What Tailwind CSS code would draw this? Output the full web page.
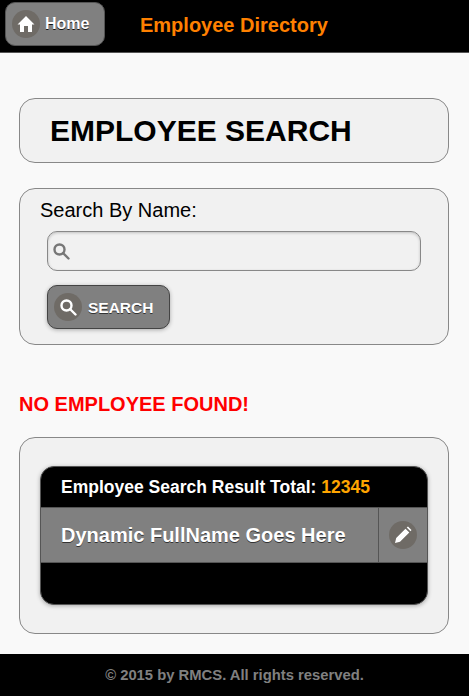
<!DOCTYPE html>
<html lang="en">
<head>
  <meta charset="UTF-8" />
  <meta name="viewport" content="width=device-width, initial-scale=1.0"/>
  <title>Employee Directory</title>
  <script src="https://cdn.jsdelivr.net/npm/@tailwindcss/browser@4"></script>
</head>
<body class="bg-[#f9f9f9] text-black font-['Liberation_Sans',Arial,sans-serif] w-[469px] h-[696px] overflow-hidden flex flex-col">

  <header class="h-[53px] shrink-0 bg-black border-b border-[#555] flex items-start">
    <a class="mt-[2px] ml-[5px] w-[100px] h-[44px] rounded-[10px] bg-[#808080] border border-[#555] flex items-start pl-[6px] pt-[7px]">
      <span class="w-[28px] h-[28px] rounded-full bg-[#6f6b66] flex items-center justify-center">
        <svg width="18" height="18" viewBox="0 0 18 18"><path d="M9 1 L17.5 9.5 L15 9.5 L15 17 L11 17 L11 11 L7 11 L7 17 L3 17 L3 9.5 L0.5 9.5 Z" fill="#fff"/></svg>
      </span>
      <span class="ml-[5px] mt-[4px] text-[16px] leading-[20px] font-bold text-white [text-shadow:0_1px_0_#111]">Home</span>
    </a>
    <h1 class="ml-[35px] mt-[13px] text-[20px] leading-[24px] font-bold text-[#ff8000]">Employee Directory</h1>
  </header>

  <main class="flex-1 pl-[19px] pr-[20px] pt-[45px]">
    <section class="h-[65px] rounded-[16px] border border-[#888] bg-[#f1f1f1] pl-[30px] flex items-center">
      <h2 class="text-[30px] leading-[36px] font-bold">EMPLOYEE SEARCH</h2>
    </section>

    <section class="mt-[25px] h-[157px] rounded-[16px] border border-[#888] bg-[#f1f1f1] pl-[20px] pt-[9px]">
      <label class="block text-[20px] leading-[24px]">Search By Name:</label>
      <div class="mt-[9px] ml-[7px] w-[374px] h-[40px] rounded-[10px] border border-[#888] bg-[#f1f1f1] shadow-[inset_0_1px_3px_rgba(0,0,0,0.2)] flex items-center pl-[4px]">
        <svg width="18" height="18" viewBox="0 0 18 18" fill="none" stroke="#777" stroke-width="2.4"><circle cx="7.5" cy="7.5" r="5"/><path d="M11 11 L16.5 16.5" stroke-linecap="round"/></svg>
      </div>
      <button class="mt-[14px] ml-[7px] w-[123px] h-[44px] rounded-[10px] bg-[#808080] border border-[#444] shadow-[0_1px_4px_rgba(0,0,0,0.3)] flex items-center pl-[6px]">
        <span class="w-[28px] h-[28px] rounded-full bg-[#6f6b66] flex items-center justify-center">
          <svg width="18" height="18" viewBox="0 0 18 18" fill="none" stroke="#fff" stroke-width="2.4"><circle cx="7.5" cy="7.5" r="5"/><path d="M11 11 L16.5 16.5" stroke-linecap="round"/></svg>
        </span>
        <span class="ml-[6px] mt-[1px] text-[15.5px] font-bold text-white [text-shadow:0_1px_0_#333]">SEARCH</span>
      </button>
    </section>

    <p class="mt-[47px] text-[20px] leading-[24px] font-bold text-[#ff0000]">NO EMPLOYEE FOUND!</p>

    <section class="mt-[21px] h-[197px] rounded-[16px] border border-[#888] bg-[#f1f1f1] pl-[20px] pt-[28px]">
      <div class="w-[388px] h-[139px] rounded-[14px] bg-black border border-[#555] shadow-[0_1px_4px_rgba(0,0,0,0.3)] overflow-hidden">
        <div class="h-[40px] pl-[20px] pt-[9px] text-[17.5px] leading-[22px] font-bold text-white">Employee Search Result Total: <span class="text-[#ffa500]">12345</span></div>
        <div class="h-[56px] bg-[#808080] border-y border-[#555] flex">
          <div class="flex-1 pl-[20px] flex items-center text-[20px] font-bold text-white [text-shadow:0_1px_0_#333]">Dynamic FullName Goes Here</div>
          <div class="w-[49px] border-l border-[#555] flex items-center justify-center">
            <span class="w-[28px] h-[28px] rounded-full bg-[#6f6b66] flex items-center justify-center">
              <svg width="18" height="18" viewBox="0 0 18 18"><path d="M1 17 L2.2 12 L11.5 2.7 L15.3 6.5 L6 15.8 Z M12.7 1.5 L14 0.5 L17.5 4 L16.5 5.3 Z" fill="#fff"/></svg>
            </span>
          </div>
        </div>
      </div>
    </section>
  </main>

  <footer class="h-[42px] shrink-0 bg-black flex items-center justify-center text-[14.8px] font-bold text-[#808080]">© 2015 by RMCS. All rights reserved.</footer>
</body>
</html>
